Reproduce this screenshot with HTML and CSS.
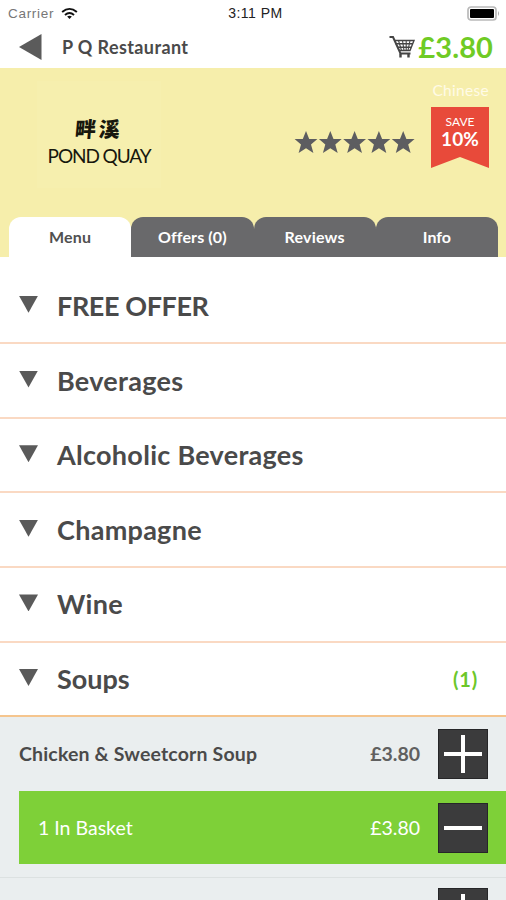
FILE: index.html
```html
<!DOCTYPE html>
<html lang="en">
<head>
<meta charset="utf-8">
<title>P Q Restaurant</title>
<link rel="stylesheet" href="styles.css">
</head>
<body>
<header class="status">
  <div class="carrier"><span>Carrier</span>
    <svg class="wifi" viewBox="0 0 18 13"><g fill="none" stroke="#111" stroke-width="2"><path d="M1.2 5Q9-1.8 16.8 5"/><path d="M4.2 8Q9 3.8 13.8 8"/></g><path d="M6.5 9.7Q9 7.9 11.5 9.7L9 12.2z" fill="#111"/></svg>
  </div>
  <span class="time">3:11 PM</span>
  <svg class="battery" viewBox="0 0 33 15"><rect x="1" y="1" width="28" height="13" rx="3" fill="#fff" stroke="#b9b9b9" stroke-width="1.7"/><rect x="3" y="3" width="24" height="9" rx="1" fill="#000"/><path d="M31 5q2 2.5 0 5z" fill="#aaa"/></svg>
</header>
<nav class="nav">
  <svg class="back" viewBox="0 0 23 26"><path d="M0 13L22.5 0V26z"/></svg>
  <h1>P Q Restaurant</h1>
  <div class="cart">
    <svg viewBox="0 0 26 25" fill="none" stroke="#444"><path d="M.5 2H4L11.5 18.5H21.5" stroke-width="2"/><path d="M5.5 5.5H25L21 15.5H10M6.5 8.8H23.5M8 12.2H22" stroke-width="1.4"/><path d="M9.5 5.5L12.5 15.5M13.5 5.5L15 15.5M17.2 5.5V15.5M21 5.5L19 15.5" stroke-width="1.1"/><path d="M11.5 18.5V22.5M19.5 18.5V22.5" stroke-width="2.4"/></svg>
    <span>£3.80</span>
  </div>
</nav>
<section class="banner">
  <div class="info">
    <div class="logo"><span class="logo-cn">畔溪</span><span class="logo-en">POND QUAY</span></div>
    <svg class="stars" viewBox="0 0 120 24"><defs><path id="s" d="M11 0L14.2 8H22.4L16 13.4L18.4 22L11 17.2L3.6 22L6 13.4L-.4 8H7.8z"/></defs><use href="#s"/><use href="#s" x="24.3"/><use href="#s" x="48.6"/><use href="#s" x="72.9"/><use href="#s" x="97.2"/></svg>
    <div class="side"><span class="cuisine">Chinese</span><div class="ribbon"><span>SAVE</span><b>10%</b></div></div>
  </div>
  <div class="tabs"><span class="tab active">Menu</span><span class="tab">Offers (0)</span><span class="tab">Reviews</span><span class="tab">Info</span></div>
</section>
<main>
  <div class="row first"><i class="caret"></i><h2 class="caps">FREE OFFER</h2></div>
  <div class="row"><i class="caret"></i><h2>Beverages</h2></div>
  <div class="row"><i class="caret"></i><h2>Alcoholic Beverages</h2></div>
  <div class="row"><i class="caret"></i><h2>Champagne</h2></div>
  <div class="row"><i class="caret"></i><h2>Wine</h2></div>
  <div class="row open"><i class="caret"></i><h2>Soups</h2><span class="count">(1)</span></div>
  <div class="items">
    <div class="item"><span class="name">Chicken &amp; Sweetcorn Soup</span><span class="price">£3.80</span><span class="btn plus"></span></div>
    <div class="item basket"><span class="name">1 In Basket</span><span class="price">£3.80</span><span class="btn"></span></div>
    <div class="item next"><span class="btn plus"></span></div>
  </div>
</main>
</body>
</html>
```
FILE: styles.css
```css
* { box-sizing: border-box; }
body { margin: 0; height: 900px; overflow: hidden; background: #fff; color: #4a4a4a; font-family: Lato, sans-serif; display: flex; flex-direction: column; }
h1, h2 { margin: 0; }
svg { display: block; overflow: visible; }
.status { flex: none; height: 26px; display: grid; grid-template-columns: 1fr auto 1fr; align-items: center; padding: 0 6px 0 8px; font: 13.5px "Liberation Sans", sans-serif; }
.carrier { display: flex; align-items: center; gap: 7px; color: #777; letter-spacing: .7px; }
.wifi { width: 17px; height: 13px; }
.time { color: #222; letter-spacing: .5px; margin-left: 3px; font-size: 14px; }
.battery { width: 33px; height: 15px; justify-self: end; }
.nav { flex: none; height: 42px; display: flex; align-items: center; padding: 0 13px 0 19px; }
.back { width: 23px; height: 26px; fill: #5b5b5b; }
.nav h1 { margin-left: 20px; font-size: 18px; line-height: 24px; letter-spacing: .4px; }
.cart { margin-left: auto; display: flex; align-items: center; gap: 3px; color: #6fcb25; font-size: 29px; font-weight: 700; line-height: 34px; letter-spacing: .1px; }
.cart svg { width: 26px; height: 25px; }
.banner { flex: none; height: 189px; background: #f6eeab; display: flex; flex-direction: column; justify-content: space-between; }
.info { display: flex; height: 120px; padding-right: 17px; }
.logo { width: 124px; height: 107px; margin: 13px 0 0 37px; padding-top: 34px; display: flex; flex-direction: column; align-items: center; color: #17170d; background: #f6efae; }
.logo-cn { font: 900 21px/27px "Noto Sans CJK SC", sans-serif; letter-spacing: 3px; transform: skewX(-5deg); }
.logo-en { margin-top: 1px; font-size: 19px; line-height: 25px; letter-spacing: -1.1px; white-space: nowrap; }
.stars { width: 120px; height: 24px; margin: 63px 0 0 134px; fill: #5d5d60; }
.side { margin-left: auto; display: flex; flex-direction: column; align-items: flex-end; padding-top: 12px; }
.cuisine { font-size: 15.5px; line-height: 20px; color: #fffbe7; letter-spacing: .3px; }
.ribbon { width: 58px; height: 61px; margin-top: 7px; padding-top: 8px; background: #e84a3a; color: #fff; clip-path: polygon(0 0, 100% 0, 100% 100%, 50% 82%, 0 100%); display: flex; flex-direction: column; align-items: center; font-size: 12px; line-height: 14px; }
.ribbon b { font-size: 19px; line-height: 20px; letter-spacing: .1px; }
.tabs { height: 40px; margin: 0 8px 0 9px; display: grid; grid-template-columns: repeat(4, 1fr); }
.tab { background: #69696b; color: #fff; border-radius: 12px 12px 0 0; text-align: center; font-size: 16px; font-weight: 700; line-height: 40px; }
.tab:nth-child(3) { letter-spacing: .2px; }
.tab:nth-child(2) { letter-spacing: .1px; }
.tab.active { background: #fff; color: #505050; letter-spacing: .2px; }
main { flex: 1; min-height: 0; display: flex; flex-direction: column; overflow: hidden; }
.row { flex: none; height: 74.6px; display: flex; align-items: center; padding: 0 28px 0 19px; border-bottom: 2px solid #fad9c3; }
.row.first { height: 87.3px; padding-top: 12px; }
.row.open { border-color: #f5c58e; }
.caret { width: 19px; height: 17px; margin: -3px 19px 0 0; background: #5a5a5a; clip-path: polygon(0 0, 100% 0, 50% 100%); }
.row h2 { font-size: 27px; line-height: 34px; letter-spacing: .28px; }
.row h2.caps { letter-spacing: -.4px; }
.row.open h2 { letter-spacing: 0; }
.count { margin-left: auto; color: #6cc72a; font-weight: 700; font-size: 20px; letter-spacing: .8px; }
.items { flex: 1; min-height: 0; background: #eaeeef; overflow: hidden; }
.item { height: 73px; display: flex; align-items: center; padding: 0 18px 0 19px; font-size: 19.5px; }
.name { font-weight: 700; letter-spacing: .16px; }
.price { margin-left: auto; font-weight: 700; color: #606060; }
.btn { width: 50px; height: 50px; margin-left: 18px; background: linear-gradient(#fff, #fff) center / 38px 4px no-repeat #3b3b3c; border: 1px solid #262628; }
.plus { background: linear-gradient(#fff, #fff) center / 38px 4px no-repeat, linear-gradient(#fff, #fff) center / 4px 38px no-repeat #3b3b3c; }
.basket { margin: 1px 0 0 19px; background: #7ed038; color: #fff; }
.basket .name, .basket .price { font-weight: 400; color: #fff; }
.basket .name { letter-spacing: 0; }
.next { height: 62px; margin-top: 13px; border-top: 1px solid #dce1e1; align-items: flex-start; padding-top: 10px; justify-content: flex-end; }
```
